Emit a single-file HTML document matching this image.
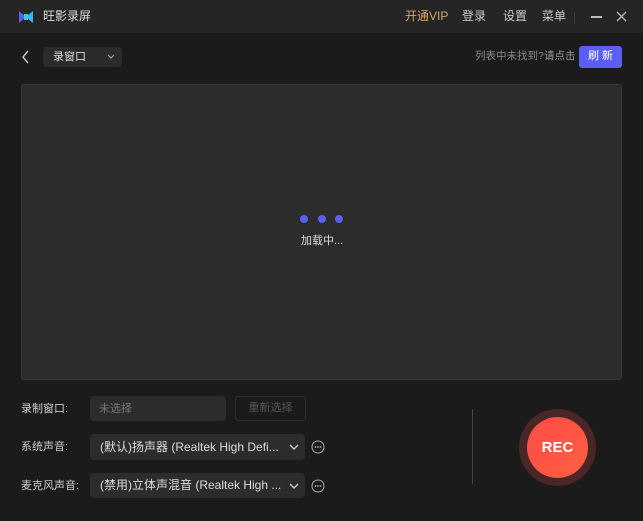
<!DOCTYPE html>
<html><head><meta charset="utf-8"><style>
*{margin:0;padding:0;box-sizing:border-box}
body{width:643px;height:521px;background:#1b1b1b;font-family:"Liberation Sans","Noto Sans CJK SC",sans-serif;color:#ddd;position:relative;overflow:hidden;font-size:12px}
.abs{position:absolute}
.title{left:0;top:0;width:643px;height:33px;background:#252525}
.sel{background:#2c2c2c;border-radius:4px}
</style></head><body>
<div class="abs title"></div>
<svg class="abs" style="left:18px;top:10px" width="16" height="14" viewBox="0 0 16 14"><path d="M1 1 L8 7 L1 13Z" fill="#5b5cf0"/><path d="M15 1 L8 7 L15 13Z" fill="#3bb4f0"/><rect x="6" y="4" width="4" height="6" fill="#29d3e6"/></svg>
<div class="abs" style="left:43px;top:7px;font-size:12px;color:#ddd">旺影录屏</div>
<div class="abs" style="left:405px;top:7px;color:#d6a56a">开通VIP</div>
<div class="abs" style="left:462px;top:7px;color:#ccc">登录</div>
<div class="abs" style="left:503px;top:7px;color:#ccc">设置</div>
<div class="abs" style="left:542px;top:7px;color:#ccc">菜单</div>
<div class="abs" style="top:12px;width:1px;height:12px;background:#3a3a3a;left:574px"></div>
<div class="abs" style="left:591px;top:16px;width:11px;height:1.5px;background:#bbb"></div>
<svg class="abs" style="left:616px;top:11px" width="11" height="11"><path d="M1 1L10 10M10 1L1 10" stroke="#bbb" stroke-width="1.3"/></svg>
<svg class="abs" style="left:21px;top:50px" width="10" height="14"><path d="M7 1L2 7L7 13" stroke="#ccc" stroke-width="1.4" fill="none"/></svg>
<div class="abs sel" style="left:43px;top:47px;width:79px;height:20px;background:#2b2b2b"></div>
<div class="abs" style="left:53px;top:48px;font-size:11px;color:#ddd">录窗口</div>
<svg class="abs" style="left:107px;top:54px" width="8" height="6"><path d="M1 1L4 4L7 1" stroke="#aaa" fill="none"/></svg>
<div class="abs" style="left:475px;top:48px;font-size:10.5px;color:#888">列表中未找到?</div>
<div class="abs" style="left:544px;top:48px;font-size:10.5px;color:#999">请点击</div>
<div class="abs" style="left:579px;top:46px;width:43px;height:22px;background:#5b5ef5;border-radius:3px;color:#fff;font-size:11px;text-align:center;line-height:21px">刷 新</div>
<div class="abs" style="left:21px;top:84px;width:601px;height:296px;background:#2c2c2c;border:1px solid #3a3a3a;border-radius:3px"></div>
<div class="abs" style="left:300px;top:215px;width:8px;height:8px;border-radius:50%;background:#5b5ef5"></div>
<div class="abs" style="left:318px;top:215px;width:8px;height:8px;border-radius:50%;background:#5b5ef5"></div>
<div class="abs" style="left:335px;top:215px;width:8px;height:8px;border-radius:50%;background:#5b5ef5"></div>
<div class="abs" style="left:301px;top:232px;font-size:11px;color:#ddd">加载中...</div>
<div class="abs" style="left:21px;top:400px;font-size:11px;color:#ccc">录制窗口:</div>
<div class="abs sel" style="left:90px;top:396px;width:136px;height:25px"></div>
<div class="abs" style="left:99px;top:400px;font-size:11px;color:#777">未选择</div>
<div class="abs" style="left:235px;top:396px;width:71px;height:25px;border:1px solid #2e2e2e;border-radius:3px;font-size:11px;color:#555;text-align:center;line-height:22px">重新选择</div>
<div class="abs" style="left:21px;top:438px;font-size:11px;color:#ccc">系统声音:</div>
<div class="abs sel" style="left:90px;top:434px;width:215px;height:26px"></div>
<div class="abs" style="left:100px;top:438px;font-size:12px;color:#ddd">(默认)扬声器 (Realtek High Defi...</div>
<svg class="abs" style="left:289px;top:444px" width="10" height="7"><path d="M1 1L5 5L9 1" stroke="#ccc" stroke-width="1.4" fill="none"/></svg>
<svg class="abs" style="left:311px;top:440px" width="14" height="14"><circle cx="7" cy="7" r="6" stroke="#aaa" fill="none"/><circle cx="4.5" cy="7" r=".9" fill="#aaa"/><circle cx="7" cy="7" r=".9" fill="#aaa"/><circle cx="9.5" cy="7" r=".9" fill="#aaa"/></svg>
<div class="abs" style="left:21px;top:477px;font-size:11px;color:#ccc">麦克风声音:</div>
<div class="abs sel" style="left:90px;top:473px;width:215px;height:25px"></div>
<div class="abs" style="left:100px;top:476px;font-size:12px;color:#ddd">(禁用)立体声混音 (Realtek High ...</div>
<svg class="abs" style="left:289px;top:483px" width="10" height="7"><path d="M1 1L5 5L9 1" stroke="#ccc" stroke-width="1.4" fill="none"/></svg>
<svg class="abs" style="left:311px;top:479px" width="14" height="14"><circle cx="7" cy="7" r="6" stroke="#aaa" fill="none"/><circle cx="4.5" cy="7" r=".9" fill="#aaa"/><circle cx="7" cy="7" r=".9" fill="#aaa"/><circle cx="9.5" cy="7" r=".9" fill="#aaa"/></svg>
<div class="abs" style="left:472px;top:409px;width:1px;height:75px;background:#444"></div>
<div class="abs" style="left:519px;top:409px;width:77px;height:77px;border-radius:50%;background:#4a2626"></div>
<div class="abs" style="left:527px;top:417px;width:61px;height:61px;border-radius:50%;background:linear-gradient(135deg,#ff4a48,#ff6040);color:#fff;font-weight:bold;font-size:15px;text-align:center;line-height:61px">REC</div>
</body></html>
